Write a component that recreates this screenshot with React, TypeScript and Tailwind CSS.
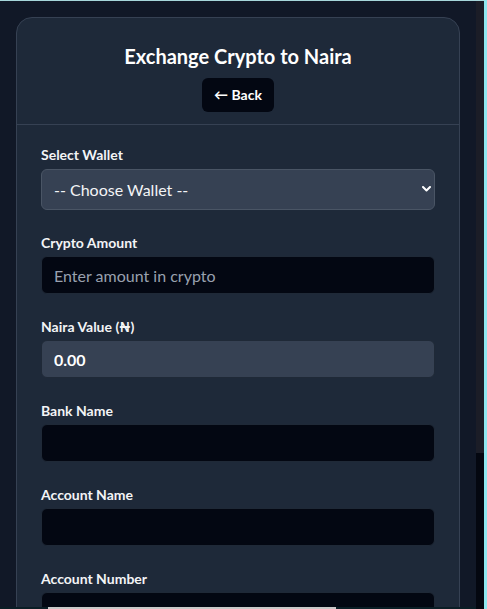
import React, { useState } from 'react';

const font = { fontFamily: 'Lato, "Noto Sans", sans-serif' };

const Field: React.FC<{ label: string; children: React.ReactNode; gap?: string }> = ({
  label,
  children,
  gap = 'mb-[3px]',
}) => (
  <div className="flex flex-col">
    <label className={`block text-sm leading-5 font-bold text-gray-100 ${gap}`}>{label}</label>
    {children}
  </div>
);

export default function App() {
  const [wallet, setWallet] = useState('');
  const [amount, setAmount] = useState('');
  const [bank, setBank] = useState('');
  const [accName, setAccName] = useState('');
  const [accNumber, setAccNumber] = useState('');

  const darkInput =
    'w-full h-[38px] px-3 rounded-md border border-[#1f2937] bg-[#030712] text-base text-white placeholder-gray-400 outline-none';

  return (
    <div className="relative h-[609px] overflow-hidden bg-[#111827]" style={font}>
      {/* browser frame edges */}
      <div className="absolute top-0 left-0 right-0 h-px bg-[#a6d6da]" />
      <div className="absolute top-0 right-0 bottom-0 w-[3px] bg-[#8ee8f0]" />
      <div className="absolute top-px right-[3px] w-[8px] h-[452px] bg-[#1b1d27]" />
      <div className="absolute top-[453px] right-[3px] bottom-0 w-[8px] bg-[#040710]" />
      <div className="absolute bottom-0 left-0 right-[11px] h-[2px] bg-[#0b1e26]" />
      <div className="absolute bottom-0 left-[48px] w-[288px] h-[2px] bg-[#c9c9c9]" />

      <div className="mr-[11px] px-4 pt-4 mt-px">
        <div className="w-full rounded-2xl border border-gray-700 bg-gray-800">
          <div className="flex flex-col items-center pt-6 pb-3 border-b border-gray-700">
            <h2 className="text-xl leading-7 font-bold text-white">Exchange Crypto to Naira</h2>
            <button
              type="button"
              className="mt-2 h-[34px] px-3 rounded-md bg-[#030712] text-sm font-bold text-white"
            >
              ← Back
            </button>
          </div>

          <form className="flex flex-col gap-[23px] px-6 pt-5 pb-6">
            <Field label="Select Wallet" gap="mb-1">
              <div className="relative">
                <select
                  value={wallet}
                  onChange={(e) => setWallet(e.target.value)}
                  className="w-full h-[41px] appearance-none px-3 rounded-md border border-gray-600 bg-gray-700 text-base text-gray-100 outline-none"
                  style={font}
                >
                  <option value="">-- Choose Wallet --</option>
                  <option value="btc">BTC Wallet</option>
                  <option value="usdt">USDT Wallet</option>
                </select>
                <svg
                  className="pointer-events-none absolute right-[4px] top-[17px]"
                  width="9"
                  height="6"
                  viewBox="0 0 9 6"
                  fill="none"
                >
                  <path d="M1 1l3.5 3.5L8 1" stroke="white" strokeWidth="2" strokeLinecap="round" strokeLinejoin="round" />
                </svg>
              </div>
            </Field>

            <Field label="Crypto Amount">
              <input
                type="text"
                value={amount}
                onChange={(e) => setAmount(e.target.value)}
                placeholder="Enter amount in crypto"
                className={darkInput}
                style={font}
              />
            </Field>

            <Field label="Naira Value (₦)">
              <input
                type="text"
                readOnly
                value="0.00"
                className="w-full h-[38px] px-3 rounded-md border border-[#1f2937] bg-gray-700 text-base font-bold text-white outline-none"
                style={font}
              />
            </Field>

            <Field label="Bank Name">
              <input type="text" value={bank} onChange={(e) => setBank(e.target.value)} className={darkInput} style={font} />
            </Field>

            <Field label="Account Name">
              <input type="text" value={accName} onChange={(e) => setAccName(e.target.value)} className={darkInput} style={font} />
            </Field>

            <Field label="Account Number">
              <input type="text" value={accNumber} onChange={(e) => setAccNumber(e.target.value)} className={darkInput} style={font} />
            </Field>
          </form>
        </div>
      </div>
    </div>
  );
}
